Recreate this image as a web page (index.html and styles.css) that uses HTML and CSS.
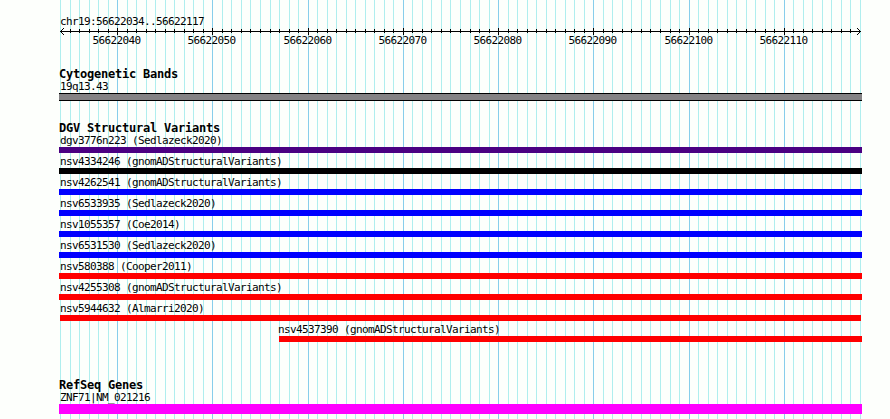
FILE: index.html
```html
<!DOCTYPE html>
<html lang="en">
<head>
<meta charset="utf-8">
<title>chr19:56622034..56622117</title>
<link rel="stylesheet" href="styles.css">
</head>
<body>
    <div id="browser">
        <!-- vertical grid, drawn behind the tracks -->
        <svg id="grid" width="890" height="419" shape-rendering="crispEdges"></svg>

        <div class="ruler">
            <p class="label">chr19:56622034..56622117</p>
            <svg id="axis" width="890" height="22"></svg>
        </div>

        <div class="track cytoband">
            <h2>Cytogenetic Bands</h2>
            <p class="label">19q13.43</p>
            <div class="bar band"></div>
        </div>

        <div class="track variants">
            <h2>DGV Structural Variants</h2>
            <div class="feature">
                <p class="label">dgv3776n223 (Sedlazeck2020)</p>
                <div class="bar complex"></div>
            </div>
            <div class="feature">
                <p class="label">nsv4334246 (gnomADStructuralVariants)</p>
                <div class="bar other"></div>
            </div>
            <div class="feature">
                <p class="label">nsv4262541 (gnomADStructuralVariants)</p>
                <div class="bar gain"></div>
            </div>
            <div class="feature">
                <p class="label">nsv6533935 (Sedlazeck2020)</p>
                <div class="bar gain"></div>
            </div>
            <div class="feature">
                <p class="label">nsv1055357 (Coe2014)</p>
                <div class="bar gain"></div>
            </div>
            <div class="feature">
                <p class="label">nsv6531530 (Sedlazeck2020)</p>
                <div class="bar gain"></div>
            </div>
            <div class="feature">
                <p class="label">nsv580388 (Cooper2011)</p>
                <div class="bar loss"></div>
            </div>
            <div class="feature">
                <p class="label">nsv4255308 (gnomADStructuralVariants)</p>
                <div class="bar loss"></div>
            </div>
            <div class="feature">
                <p class="label">nsv5944632 (Almarri2020)</p>
                <div class="bar loss inside"></div>
            </div>
            <div class="feature partial">
                <p class="label">nsv4537390 (gnomADStructuralVariants)</p>
                <div class="bar loss"></div>
            </div>
        </div>

        <div class="track genes">
            <h2>RefSeq Genes</h2>
            <p class="label">ZNF71|NM_021216</p>
            <div class="bar gene"></div>
        </div>
    </div>

    <script>
        var start = 56622034;
        var end = 56622118;
        var left = 60;
        var width = 800;

        function toX(pos){
            return left + Math.round((pos - start) * width / (end - start));
        }

        function rect(x, y, w, h, name){
            return '<rect class="' + name + '" x="' + x + '" y="' + y + '" width="' + w + '" height="' + h + '"/>';
        }

        function drawRuler(){
            var lines = "";
            var ticks = rect(60, 5, 801, 1, "tick");
            for(var pos = start; pos <= end; pos++){
                var x = toX(pos);
                var major = pos % 10 == 0;
                lines += rect(x, 0, 1, 419, major ? "major" : "minor");
                if(pos == start || pos == end) continue;
                if(major){
                    ticks += rect(x, 2, 1, 7, "tick");
                    ticks += '<text x="' + (x - 24.5) + '" y="18">' + pos + '</text>';
                }else{
                    ticks += rect(x, 3, 1, 4, "tick");
                }
            }
            // arrow heads
            ticks += '<path class="arrow" d="M64 2L60.5 5.5L64 9M857 2L860.5 5.5L857 9"/>';
            document.getElementById("grid").innerHTML = lines;
            document.getElementById("axis").innerHTML = ticks;
        }
        drawRuler();
    </script>
</body>
</html>
```
FILE: styles.css
```css
body {
    margin: 0;
    background-color: #fdfffc;
    color: #000;
    font-family: "DejaVu Sans Mono", monospace;
}
#browser {
    position: relative;
    height: 419px;
    overflow: hidden;
}
#grid {
    position: absolute;
    top: 0;
    left: 0;
    z-index: -1;
}
.major {
    fill: #87ceeb;
}
.minor {
    fill: #afeeee;
}

.label, #axis text {
    font-size: 11px;
    letter-spacing: -0.622px;
}
.label {
    margin: 0;
    padding-left: 1px;
    height: 12px;
    line-height: 14px;
    white-space: pre;
}
h2 {
    margin: 0;
    height: 12px;
    font-size: 12px;
    line-height: 12px;
    letter-spacing: -0.224px;
}

/* ruler */
.ruler {
    height: 68px;
    box-sizing: border-box;
    padding-top: 15px;
}
.ruler .label {
    padding-left: 60px;
    height: 11px;
}
#axis {
    display: block;
}
.tick {
    shape-rendering: crispEdges;
}
.arrow {
    fill: none;
    stroke: #000;
}

/* tracks */
.track {
    width: 803px;
    margin-left: 59px;
}
.cytoband {
    height: 54px;
}
.variants {
    height: 257px;
}
.feature {
    height: 21px;
}
.bar {
    height: 6px;
    margin-top: 1px;
}
.band {
    box-sizing: border-box;
    height: 8px;
    border: solid #000;
    border-width: 1px 0;
    background-color: #848284;
}
.complex {
    background-color: #4b0082;
}
.other {
    background-color: #000;
}
.gain {
    background-color: #00f;
}
.loss {
    background-color: #f00;
}
.inside {
    margin-left: 1px;
    margin-right: 1px;
}
.partial {
    margin-left: 220px;
}
.partial .label {
    padding-left: 0;
    margin-left: -1px;
}
.gene {
    height: 10px;
    background-color: #f0f;
}
```
